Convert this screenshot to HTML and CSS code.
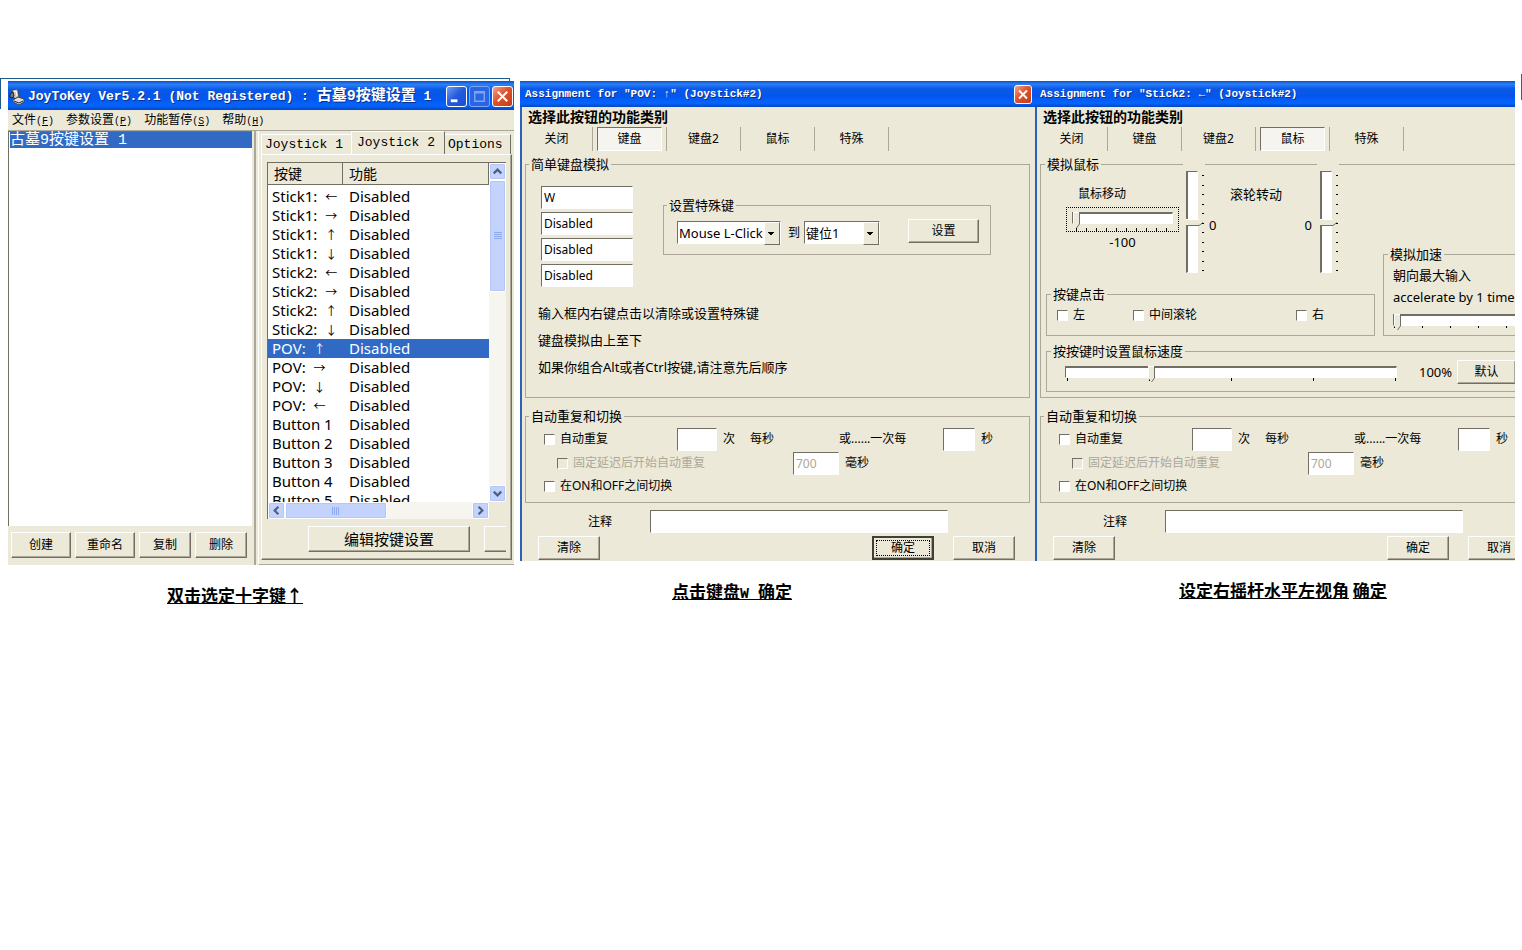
FILE: index.html
```
<!DOCTYPE html>
<html lang="zh-CN">
<head>
<meta charset="utf-8">
<title>JoyToKey</title>
<link rel="stylesheet" href="styles.css">
</head>
<body>
<main class="board">
  <section class="step step-main">
    <div class="window">
      <header class="titlebar titlebar-main">
        <svg class="app-icon" viewBox="0 0 16 16" aria-hidden="true"><path d="M3 1l5-1 1 2 1 6-3 2-3-2z" fill="#c9c9c9" stroke="#444"/><path d="M1 5l3-2 1 4-2 2-2-1z" fill="#777" stroke="#222"/><path d="M4 11l5-3 6 2v3l-5 3-6-3z" fill="#ddd" stroke="#444"/><path d="M5 12l5 2 4-2" fill="none" stroke="#222"/><path d="M5 3l2-1 1 5" fill="none" stroke="#fff"/></svg>
        <h1 class="title">JoyToKey Ver5.2.1 (Not Registered) : <span class="title-cn">古墓9按键设置</span> 1</h1>
        <div class="caption-buttons">
          <button class="cap" aria-label="最小化"><svg viewBox="0 0 20 20"><path d="M4 13h7v3H4z" fill="#fff"/></svg></button>
          <button class="cap cap-dim" aria-label="最大化"><svg viewBox="0 0 20 20"><path d="M5 5h10v10H5zM5 6h10" fill="none" stroke="#7da5f5" stroke-width="1.5"/></svg></button>
          <button class="cap cap-close" aria-label="关闭窗口"><svg viewBox="0 0 20 20"><path d="M5 5l10 10M15 5L5 15" stroke="#fff" stroke-width="2.2"/></svg></button>
        </div>
      </header>
      <nav class="menu">
        <button>文件<span class="key">(<u>F</u>)</span></button>
        <button>参数设置<span class="key">(<u>P</u>)</span></button>
        <button>功能暂停<span class="key">(<u>S</u>)</span></button>
        <button>帮助<span class="key">(<u>H</u>)</span></button>
      </nav>
      <div class="panes">
        <div class="profiles">
          <ul class="profile-list"><li>古墓9按键设置 1</li></ul>
          <div class="profile-actions">
            <button class="btn w60">创建</button>
            <button class="btn w60">重命名</button>
            <button class="btn w52">复制</button>
            <button class="btn w52">删除</button>
          </div>
        </div>
        <div class="sticks">
          <div class="sheet-tabs">
            <button class="sheet-tab tab-first">Joystick 1</button>
            <button class="sheet-tab tab-on">Joystick 2</button>
            <button class="sheet-tab tab-last">Options</button>
          </div>
          <div class="sheet">
            <div class="grid-view">
              <div class="rows">
                <table>
                  <thead><tr><th class="c1">按键</th><th>功能</th></tr></thead>
                  <tbody>
                    <tr><td>Stick1: <span class="dir">←</span></td><td>Disabled</td></tr>
                    <tr><td>Stick1: <span class="dir">→</span></td><td>Disabled</td></tr>
                    <tr><td>Stick1: <span class="dir">↑</span></td><td>Disabled</td></tr>
                    <tr><td>Stick1: <span class="dir">↓</span></td><td>Disabled</td></tr>
                    <tr><td>Stick2: <span class="dir">←</span></td><td>Disabled</td></tr>
                    <tr><td>Stick2: <span class="dir">→</span></td><td>Disabled</td></tr>
                    <tr><td>Stick2: <span class="dir">↑</span></td><td>Disabled</td></tr>
                    <tr><td>Stick2: <span class="dir">↓</span></td><td>Disabled</td></tr>
                    <tr class="selected"><td>POV: <span class="dir">↑</span></td><td>Disabled</td></tr>
                    <tr><td>POV: <span class="dir">→</span></td><td>Disabled</td></tr>
                    <tr><td>POV: <span class="dir">↓</span></td><td>Disabled</td></tr>
                    <tr><td>POV: <span class="dir">←</span></td><td>Disabled</td></tr>
                    <tr><td>Button 1</td><td>Disabled</td></tr>
                    <tr><td>Button 2</td><td>Disabled</td></tr>
                    <tr><td>Button 3</td><td>Disabled</td></tr>
                    <tr><td>Button 4</td><td>Disabled</td></tr>
                    <tr><td>Button 5</td><td>Disabled</td></tr>
                  </tbody>
                </table>
              </div>
              <div class="vbar">
                <button class="arrow" aria-label="向上"><svg viewBox="0 0 16 16"><path d="M4 10l4-4 4 4" /></svg></button>
                <div class="thumb vthumb"><svg viewBox="0 0 8 8"><path d="M0 .5h8M0 2.5h8M0 4.5h8M0 6.5h8"/></svg></div>
                <button class="arrow to-end" aria-label="向下"><svg viewBox="0 0 16 16"><path d="M4 6l4 4 4-4"/></svg></button>
              </div>
              <div class="hbar">
                <button class="arrow" aria-label="向左"><svg viewBox="0 0 16 16"><path d="M10 4L6 8l4 4"/></svg></button>
                <div class="thumb hthumb"><svg viewBox="0 0 8 8"><path d="M.5 0v8M2.5 0v8M4.5 0v8M6.5 0v8"/></svg></div>
                <button class="arrow to-end" aria-label="向右"><svg viewBox="0 0 16 16"><path d="M6 4l4 4-4 4"/></svg></button>
              </div>
            </div>
            <div class="sheet-actions">
              <button class="btn btn-edit">编辑按键设置</button>
              <button class="btn btn-cut" aria-label="更多"></button>
            </div>
          </div>
        </div>
      </div>
    </div>
    <p class="caption cap-a">双击选定十字键↑</p>
  </section>

  <section class="step step-key">
    <div class="dialog">
      <header class="titlebar titlebar-dialog">
        <h2 class="title">Assignment for "POV: ↑" (Joystick#2)</h2>
        <button class="cap cap-close cap-small" aria-label="关闭窗口"><svg viewBox="0 0 20 20"><path d="M5 5l10 10M15 5L5 15" stroke="#fff" stroke-width="2.4"/></svg></button>
      </header>
      <div class="dialog-body">
        <h3 class="heading">选择此按钮的功能类别</h3>
        <div class="tabs">
          <div class="tab"><button>关闭</button></div>
          <div class="tab"><button class="on">键盘</button></div>
          <div class="tab"><button>键盘2</button></div>
          <div class="tab"><button>鼠标</button></div>
          <div class="tab"><button>特殊</button></div>
        </div>
        <fieldset class="group keyboard">
          <legend>简单键盘模拟</legend>
          <div class="key-row">
            <div class="keys">
              <input class="box" aria-label="按键一" value="W">
              <input class="box" aria-label="按键二" value="Disabled">
              <input class="box" aria-label="按键三" value="Disabled">
              <input class="box" aria-label="按键四" value="Disabled">
            </div>
            <fieldset class="group special">
              <legend>设置特殊键</legend>
              <div class="special-row">
                <span class="combo combo-a"><select aria-label="特殊键"><option>Mouse L-Click</option></select></span>
                <label class="to" for="slot">到</label>
                <span class="combo combo-b"><select id="slot"><option>键位1</option></select></span>
                <button class="btn btn-set">设置</button>
              </div>
            </fieldset>
          </div>
          <div class="notes">
            <p>输入框内右键点击以清除或设置特殊键</p>
            <p>键盘模拟由上至下</p>
            <p>如果你组合Alt或者Ctrl按键,请注意先后顺序</p>
          </div>
        </fieldset>
        <fieldset class="group repeat">
          <legend>自动重复和切换</legend>
          <div class="line">
            <label class="check"><input type="checkbox">自动重复</label>
            <input class="box times" id="t1"><label class="after" for="t1">次</label><span class="per">每秒</span>
            <label class="or" for="s1">或......一次每</label>
            <input class="box secs" id="s1"><span class="after">秒</span>
          </div>
          <div class="line line-sub">
            <label class="check muted"><input type="checkbox" disabled>固定延迟后开始自动重复</label>
            <input class="box delay" id="d1" value="700" disabled><label class="after" for="d1">毫秒</label>
          </div>
          <div class="line line-last"><label class="check"><input type="checkbox">在ON和OFF之间切换</label></div>
        </fieldset>
        <div class="comment"><label for="c1">注释</label><input class="box" id="c1"></div>
        <div class="actions">
          <button class="btn">清除</button>
          <button class="btn ok default">确定</button>
          <button class="btn">取消</button>
        </div>
      </div>
    </div>
    <p class="caption cap-b">点击键盘<span class="w">W </span>确定</p>
  </section>

  <section class="step step-mouse">
    <div class="dialog">
      <header class="titlebar titlebar-dialog">
        <h2 class="title">Assignment for "Stick2: ←" (Joystick#2)</h2>
      </header>
      <div class="dialog-body">
        <h3 class="heading">选择此按钮的功能类别</h3>
        <div class="tabs">
          <div class="tab"><button>关闭</button></div>
          <div class="tab"><button>键盘</button></div>
          <div class="tab"><button>键盘2</button></div>
          <div class="tab"><button class="on">鼠标</button></div>
          <div class="tab"><button>特殊</button></div>
        </div>
        <fieldset class="group mouse">
          <legend>模拟鼠标</legend>
          <div class="mouse-cols">
            <div class="mouse-left">
              <div class="axes">
                <div class="move">
                  <label for="mx">鼠标移动</label>
                  <div class="focus"><input class="range" id="mx" type="range" min="-100" max="100" value="-100"></div>
                  <output>-100</output>
                </div>
                <div class="vslider"><input type="range" aria-label="垂直移动" min="-100" max="100" value="0"><svg viewBox="0 0 4 101"><path d="M1 4.5h2M1 14.5h2M1 23.5h2M1 33.5h2M1 42.5h2M1 52.5h2M1 61.5h2M1 71.5h2M1 80.5h2M1 90.5h2M1 99.5h2"/></svg></div>
                <div class="wheel">
                  <label for="wy">滚轮转动</label>
                  <div class="zeros"><output>0</output><output>0</output></div>
                </div>
                <div class="vslider"><input id="wy" type="range" min="-100" max="100" value="0"><svg viewBox="0 0 4 101"><path d="M1 4.5h2M1 14.5h2M1 23.5h2M1 33.5h2M1 42.5h2M1 52.5h2M1 61.5h2M1 71.5h2M1 80.5h2M1 90.5h2M1 99.5h2"/></svg></div>
              </div>
              <fieldset class="group clicks">
                <legend>按键点击</legend>
                <div class="click-row">
                  <label class="check"><input type="checkbox">左</label>
                  <label class="check"><input type="checkbox">中间滚轮</label>
                  <label class="check"><input type="checkbox">右</label>
                </div>
              </fieldset>
            </div>
            <fieldset class="group accel">
              <legend>模拟加速</legend>
              <p>朝向最大输入</p>
              <p><label for="ac">accelerate by 1 time</label></p>
              <div class="ruler ruler-accel"><input class="range" id="ac" type="range" min="1" max="6" value="1"></div>
            </fieldset>
          </div>
          <fieldset class="group speed">
            <legend>按按键时设置鼠标速度</legend>
            <div class="speed-row">
              <div class="ruler ruler-speed"><input class="range" aria-label="鼠标速度" type="range" min="0" max="400" value="102"></div>
              <output>100%</output>
              <button class="btn btn-default">默认</button>
            </div>
          </fieldset>
        </fieldset>
        <fieldset class="group repeat">
          <legend>自动重复和切换</legend>
          <div class="line">
            <label class="check"><input type="checkbox">自动重复</label>
            <input class="box times" id="t2"><label class="after" for="t2">次</label><span class="per">每秒</span>
            <label class="or" for="s2">或......一次每</label>
            <input class="box secs" id="s2"><span class="after">秒</span>
          </div>
          <div class="line line-sub">
            <label class="check muted"><input type="checkbox" disabled>固定延迟后开始自动重复</label>
            <input class="box delay" id="d2" value="700" disabled><label class="after" for="d2">毫秒</label>
          </div>
          <div class="line line-last"><label class="check"><input type="checkbox">在ON和OFF之间切换</label></div>
        </fieldset>
        <div class="comment"><label for="c2">注释</label><input class="box" id="c2"></div>
        <div class="actions">
          <button class="btn">清除</button>
          <button class="btn ok">确定</button>
          <button class="btn">取消</button>
        </div>
      </div>
    </div>
    <p class="caption cap-c"><u>设定右摇杆水平左视角</u> <u>确定</u></p>
  </section>
</main>
</body>
</html>
```
FILE: styles.css
```
* { box-sizing: border-box; }
body {
  margin: 0;
  background: #fff;
  color: #000;
  font: 12px/16px "Noto Sans", "Noto Sans CJK SC", sans-serif;
}
h1, h2, h3, p, ul { margin: 0; padding: 0; list-style: none; }
button, input, select { font: inherit; color: inherit; margin: 0; padding: 0; border-radius: 0; }
button { background: none; border: 0; white-space: nowrap; }

.board {
  position: relative;
  display: flex;
  align-items: flex-start;
  padding: 81px 7px 0 8px;
  overflow: hidden;
}
.board::before {
  content: "";
  position: absolute;
  left: 0;
  top: 78px;
  width: 508px;
  height: 30px;
  border: solid #1d5c8c;
  border-width: 1px 1px 0 1px;
}
.board::after {
  content: "";
  position: absolute;
  right: 0;
  top: 74px;
  width: 1px;
  height: 26px;
  background: #1c62c8;
}
.step { min-width: 0; position: relative; }
.step-main { flex: 506 1 0; margin-right: 6px; }
.step-key { flex: 515 1 0; }
.step-mouse { flex: 480 1 0; }

/* title bars */
.titlebar {
  display: flex;
  align-items: center;
  background: linear-gradient(#0a4fd0, #2b7ff5 12%, #0a58e6 30%, #0356ee 60%, #0465fd 85%, #0347c4);
  color: #fff;
}
.titlebar-main { height: 29px; padding: 2px 0 0 1px; }
.titlebar-dialog { height: 26px; padding: 0 3px 0 5px; }
.title { flex: 1; white-space: pre; overflow: hidden; font-weight: bold; font-family: "Liberation Mono", "Noto Sans CJK SC", monospace; text-shadow: 1px 1px #0a2f8c; }
.titlebar-main .title { font-size: 13px; line-height: 20px; margin-left: 3px; }
.title-cn { font-size: 15px; }
.titlebar-dialog .title { font-size: 11px; line-height: 16px; }
.app-icon { width: 16px; height: 16px; }
.caption-buttons { display: flex; gap: 2px; padding-right: 1px; }
.cap { width: 21px; height: 21px; border: 1px solid #fff; border-radius: 3px; background: linear-gradient(135deg, #6f9cf5, #2158dc 50%, #1c4fd0); }
.cap svg { display: block; width: 100%; height: 100%; }
.cap-dim { border-color: #7da5f5; background: #2a66e4; }
.cap-close { background: linear-gradient(135deg, #f0a58c, #e0532c 45%, #c43c16); }
.cap-small { width: 18px; height: 19px; }

/* main window */
.window { background: #ece9d8; }
.menu { display: flex; gap: 12px; height: 20px; padding: 0 4px; }
.menu button { line-height: 20px; }
.key { font: 10px "Liberation Mono", monospace; }
.panes { display: flex; border-top: 1px solid #aca899; }
.profiles { flex: none; width: 248px; display: flex; flex-direction: column; border-right: 2px solid #aca899; }
.profile-list { flex: 1; margin-right: 2px; background: #fff; border-left: 1px solid #716f64; border-top: 1px solid #716f64; }
.profile-list li { height: 16px; margin-left: 1px; background: #316ac5; color: #fff; font: 15px/18px "Liberation Mono", "Noto Sans CJK SC", monospace; }
.profile-actions { display: flex; gap: 4px; padding: 6px 3px 7px; }
.btn {
  height: 24px;
  background: #ece9d8;
  border: 1px solid;
  border-color: #fff #716f64 #716f64 #fff;
  box-shadow: inset -1px -1px #aca899;
  font-size: 12px;
  line-height: 18px;
}
.profile-actions .btn { height: 26px; }
.w60 { width: 60px; }
.w52 { width: 52px; }
.sticks { flex: 1; min-width: 0; padding: 0 2px 4px 2px; margin-left: 2px; border-left: 1px solid #fff; border-bottom: 1px solid #aca899; }
.sheet-tabs { display: flex; align-items: flex-end; height: 23px; }
.sheet-tab { height: 20px; padding: 0 3px; text-align: left; font: 13px/20px "Liberation Mono", monospace; border: 1px solid #fff; border-bottom: 0; }
.tab-first { width: 90px; border-right: 0; }
.tab-on { width: 94px; height: 23px; padding-left: 5px; border-right: 1px solid #716f64; }
.tab-last { width: 66px; border-left: 0; border-right: 1px solid #716f64; }
.sheet { border: 1px solid; border-color: #fff #716f64 #716f64 #fff; box-shadow: inset -1px -1px #aca899; padding: 7px 5px 7px 5px; }
.grid-view {
  display: grid;
  grid-template-columns: minmax(0, 1fr) 17px;
  grid-template-rows: 339px 17px;
  border-left: 1px solid #716f64;
  border-top: 1px solid #716f64;
  background: #ece9d8;
}
.rows { overflow: hidden; background: #fff; }
.rows table { width: 100%; border-collapse: separate; border-spacing: 0; table-layout: fixed; font-size: 15px; }
.rows th { height: 22px; padding: 0 0 0 6px; background: #ece9d8; border-right: 1px solid #716f64; border-bottom: 1px solid #716f64; text-align: left; font-weight: normal; font-size: 14px; line-height: 20px; }
.c1 { width: 75px; }
.rows td { height: 19px; line-height: 19px; padding: 0 0 0 6px; white-space: nowrap; }
.rows td:first-child { padding-left: 4px; }
.rows tbody::before { content: ""; display: block; height: 2px; }
.dir { margin-left: 4px; font-size: 12px; line-height: 16px; }
.selected { background: #316ac5; color: #fff; }
.vbar, .hbar { display: flex; background: #f6f5f0; }
.vbar { flex-direction: column; }
.hbar { grid-column: 1; }
.arrow, .thumb { border: 1px solid #fff; border-radius: 2px; background: #c3d3fd; box-shadow: inset 0 0 0 1px #b3c6f5; }
.arrow { width: 17px; height: 17px; flex: none; }
.arrow svg { display: block; width: 15px; height: 15px; fill: none; stroke: #4d6185; stroke-width: 2.4; }
.to-end { margin-left: auto; }
.vbar .to-end { margin: auto 0 0; }
.thumb { display: flex; align-items: center; justify-content: center; }
.thumb svg { width: 8px; height: 8px; stroke: #8ea9ec; shape-rendering: crispEdges; }
.vthumb { height: 112px; }
.hthumb { width: 102px; }
.sheet-actions { display: flex; gap: 14px; padding: 7px 0 0 41px; overflow: hidden; }
.btn-edit { flex: none; width: 162px; height: 26px; font-size: 15px; line-height: 20px; }
.btn-cut { flex: 1; height: 26px; border-right: 0; box-shadow: inset 0 -1px #aca899; }

/* assignment dialogs */
.dialog { overflow: hidden; }
.dialog-body { min-width: 515px; background: #ece9d8; border-left: 2px solid #2a62b8; padding: 0 5px 1px 3px; font-size: 12px; }
.heading { font-size: 14px; line-height: 20px; padding-left: 3px; }
.tabs { display: flex; height: 24px; }
.tab { width: 74px; padding: 0 4px; border-right: 1px solid #aca899; }
.tab:first-child { width: 68px; padding-left: 0; }
.tab button { width: 100%; height: 24px; font-size: 12px; line-height: 22px; border: 1px solid transparent; }
.tab .on { background: #f5f4ee; border-color: #716f64 #fff #fff #716f64; }
.group { margin: 0; padding: 0; border: 1px solid #aca899; min-width: 0; }
.group legend { margin-left: 3px; padding: 0 2px; line-height: 16px; font-size: 13px; }
.keyboard, .mouse { margin-top: 5px; }
.keyboard { padding: 14px 0 16px; }
.key-row { display: flex; align-items: flex-start; padding-left: 15px; }
.keys { display: grid; gap: 3px; width: 92px; }
.box { height: 23px; min-width: 0; padding: 0 2px; background: #fff; border: 1px solid; border-color: #716f64 #fff #fff #716f64; font-size: 12px; outline: 0; }
.special { width: 328px; margin: 11px 0 0 30px; }
.special-row { display: flex; align-items: flex-start; padding: 6px 0 9px 13px; }
.combo { position: relative; height: 24px; margin-top: 2px; }
.combo select { width: 100%; height: 23px; padding-left: 1px; appearance: none; background: #fff; border: 1px solid; border-color: #716f64 #fff #fff #716f64; font-size: 13px; line-height: 20px; }
.combo::after {
  content: "";
  position: absolute;
  right: 1px;
  top: 1px;
  width: 14px;
  height: 21px;
  background: linear-gradient(#000, #000) 3px 9px / 6px 1px no-repeat, linear-gradient(#000, #000) 4px 10px / 4px 1px no-repeat, linear-gradient(#000, #000) 5px 11px / 2px 1px no-repeat, #ece9d8;
  border: 1px solid;
  border-color: #fff #716f64 #716f64 #fff;
  pointer-events: none;
}
.combo-a { width: 104px; }
.combo-b { width: 76px; }
.to { width: 23px; padding: 6px 0 0 7px; }
.btn-set { width: 71px; margin-left: 28px; }
.notes { padding: 13px 0 0 12px; font-size: 13px; line-height: 27px; }
.notes p { white-space: nowrap; }
.repeat { margin-top: 10px; padding: 3px 0 5px; }
.line { display: flex; align-items: center; height: 24px; padding-left: 18px; white-space: nowrap; }
.line-sub { padding-left: 31px; }
.line-last { height: 22px; }
.check { display: flex; align-items: center; gap: 5px; white-space: nowrap; }
.check input { appearance: none; width: 11px; height: 11px; background: #fff; border: 1px solid; border-color: #716f64 #fff #fff #716f64; }
.muted { color: #aca899; }
.check.muted input { background: #ece9d8; }
.line .check { width: 133px; }
.line-sub .check { width: 236px; }
.times { width: 40px; }
.secs { width: 32px; }
.delay { width: 46px; color: #aca899; }
.after { margin-left: 6px; }
.per { margin-left: 15px; width: 89px; }
.or { width: 104px; }
.comment { display: flex; align-items: center; margin-top: 7px; padding-left: 63px; }
.comment label { width: 62px; }
.comment .box { width: 298px; }
.actions { display: flex; gap: 19px; padding: 3px 15px 0 13px; }
.actions .btn { width: 62px; }
.actions .ok { margin-left: auto; }
.default { border: 2px solid #403f38; outline: 1px dotted #000; outline-offset: -5px; }

/* mouse page */
.mouse { padding: 0 0 5px 5px; }
.mouse legend { margin-left: 4px; }
.mouse > legend { margin-left: -1px; }
.mouse-cols { display: flex; gap: 8px; }
.mouse-left { flex: none; width: 329px; }
.axes { display: flex; height: 114px; }
.move { width: 137px; padding: 14px 0 0 20px; }
.move label { display: block; padding-left: 12px; }
.move output { display: block; width: 113px; text-align: center; font-size: 13px; padding-top: 2px; }
.focus { width: 113px; height: 25px; margin-top: 5px; padding: 3px 6px; outline: 1px dotted #000; outline-offset: -1px; background: repeating-linear-gradient(90deg, #000 0 1px, transparent 1px 10px) 10px 21px / 94px 3px no-repeat; }
.range { display: block; width: 100%; height: 16px; appearance: none; background: none; }
.range::-webkit-slider-runnable-track { height: 12px; background: #fff; border: 1px solid; border-color: #716f64 #fff #fff #716f64; border-top-width: 2px; }
.range::-webkit-slider-thumb {
  appearance: none;
  width: 7px;
  height: 16px;
  margin-top: -2px;
  border: 0;
  border-radius: 0;
  background: url("data:image/svg+xml,%3Csvg xmlns='http://www.w3.org/2000/svg' width='7' height='16'%3E%3Cpath d='M0 0h7v12l-3 4-4-4z' fill='%23ece9d8'/%3E%3Cpath d='M.5 12V.5H6' fill='none' stroke='%23fff'/%3E%3Cpath d='M6.5 0v12l-3 4' fill='none' stroke='%23716f64'/%3E%3C/svg%3E") no-repeat;
}
.vslider { display: flex; gap: 4px; width: 22px; margin-top: -12px; padding: 11px 0 0 2px; background: #ece9d8; height: 118px; }
.vslider input { writing-mode: vertical-lr; appearance: none; width: 14px; height: 102px; background: none; flex: none; }
.vslider input::-webkit-slider-runnable-track { width: 12px; height: 102px; background: #fff; border: 1px solid; border-color: #716f64 #fff #fff #716f64; border-left-width: 2px; }
.vslider input::-webkit-slider-thumb {
  appearance: none;
  width: 17px;
  height: 7px;
  margin-left: -2px;
  border: 0;
  border-radius: 0;
  background: url("data:image/svg+xml,%3Csvg xmlns='http://www.w3.org/2000/svg' width='17' height='7'%3E%3Cpath d='M0 0h13l4 3-4 4H0z' fill='%23ece9d8'/%3E%3Cpath d='M0 .5h13' stroke='%23fff'/%3E%3Cpath d='M0 6.5h13l4-3' fill='none' stroke='%23716f64'/%3E%3C/svg%3E") no-repeat;
}
.vslider svg { width: 4px; height: 101px; flex: none; stroke: #000; margin-left: -2px; }
.wheel { width: 112px; padding: 14px 5px 0 4px; }
.wheel label { display: block; padding-left: 21px; font-size: 13px; }
.zeros { display: flex; justify-content: space-between; padding-top: 15px; font-size: 13px; }
.click-row { display: flex; height: 26px; padding-left: 10px; margin-bottom: 7px; }
.click-row .check:nth-child(1) { width: 76px; }
.click-row .check:nth-child(2) { width: 163px; }
.accel { flex: none; width: 160px; margin-top: 74px; padding: 2px 0 5px 9px; }
.mouse .accel legend { margin-left: -5px; }
.accel p { line-height: 22px; font-size: 13px; white-space: nowrap; }
.ruler { height: 20px; padding-top: 2px; }
.ruler-accel { margin-top: 2px; background: repeating-linear-gradient(90deg, #000 0 1px, transparent 1px 28px) 1px 15px / 100% 3px no-repeat; }
.speed { width: 490px; margin-top: 7px; padding-bottom: 7px; }
.speed-row { display: flex; align-items: center; height: 25px; padding-left: 18px; }
.ruler-speed { width: 332px; background: repeating-linear-gradient(90deg, #000 0 1px, transparent 1px 82px) 2px 16px / 329px 3px no-repeat; }
.speed output { width: 60px; padding-left: 22px; font-size: 13px; }
.btn-default { width: 59px; }

/* captions */
.caption { font-size: 17px; line-height: 24px; font-weight: bold; text-decoration: underline; white-space: pre; font-family: "Noto Sans CJK SC", sans-serif; }
.cap-a { padding: 18px 0 0 159px; }
.cap-b { padding: 18px 0 0 152px; }
.cap-c { padding: 17px 0 0 144px; text-decoration: none; }
.w { font: bold 15px "Liberation Mono", monospace; }
```
